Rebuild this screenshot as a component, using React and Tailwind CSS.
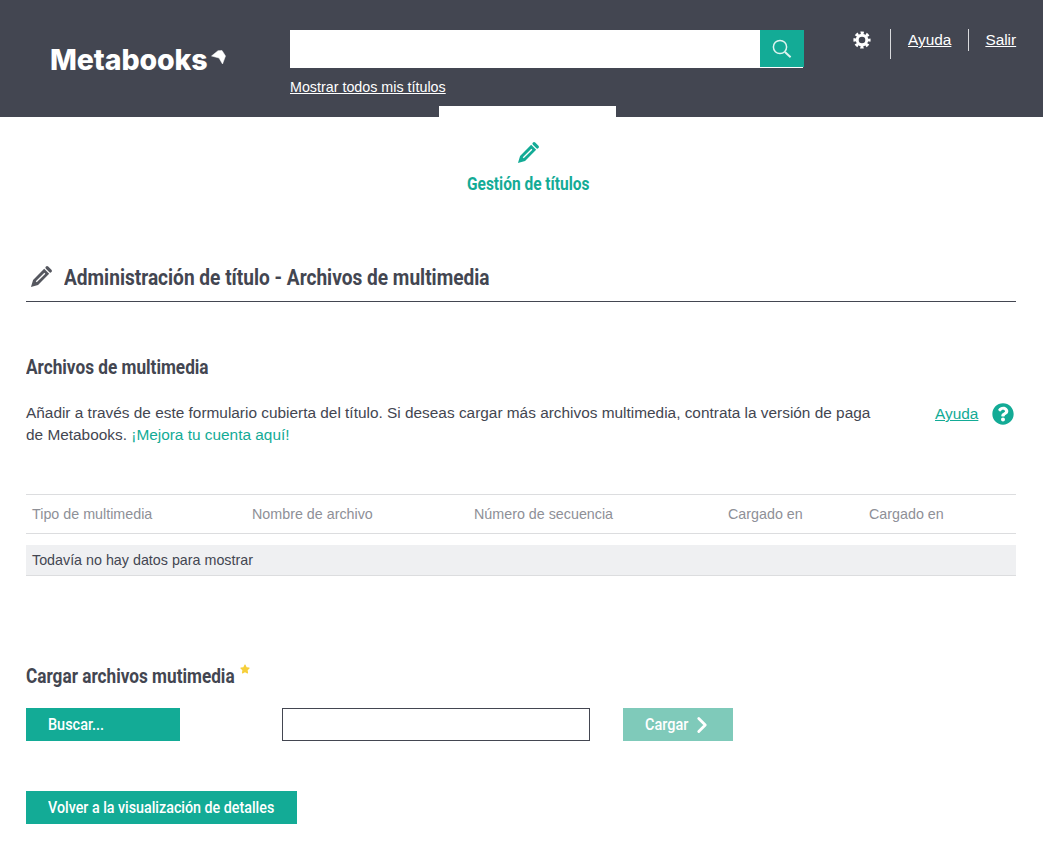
import React from "react";
import { FaQuestionCircle, FaStar } from "react-icons/fa";
import { ChevronRight } from "lucide-react";

const condensed = "inline-block whitespace-nowrap font-['Roboto',sans-serif]";

function PencilIcon({ className }) {
  return (
    <svg className={className} viewBox="0 0 24 24" fill="currentColor">
      <path
        fillRule="evenodd"
        d="M1 23 L3.2 15.6 L14.8 4 L20 9.2 L8.4 20.8 Z M6 17 L7 18 L16 9 L15 8 Z"
      />
      <line x1="17.8" y1="2.8" x2="21.2" y2="6.2" stroke="currentColor" strokeWidth="3.4" strokeLinecap="round" />
    </svg>
  );
}

function GearIcon() {
  return (
    <svg className="ml-[49px] mt-[2px]" width="18" height="18" viewBox="0 0 18 18" fill="none" stroke="#fff">
      <circle cx="9" cy="9" r="4.8" strokeWidth="3" />
      <circle cx="9" cy="9" r="7.2" strokeWidth="2.8" strokeDasharray="3.2 2.45" strokeDashoffset="1.6" />
    </svg>
  );
}

function Header() {
  return (
    <header className="relative flex h-[117px] bg-[#434651] text-white">
      <div className="flex w-[290px] shrink-0 items-start pl-[50px] pt-[42px]">
        <span className="font-['Inter',sans-serif] text-[28.5px] font-extrabold leading-[36px] tracking-[-0.1px]">
          Metabooks
        </span>
        <svg className="ml-[3px] mt-[8px]" width="15" height="15" viewBox="0 0 15 15">
          <path d="M0.5 6 L7 0.7 L11 0.5 L14.5 6 L11.5 14 L8 8 Z" fill="#fff" stroke="#fff" strokeWidth="0.5" strokeLinejoin="round" />
        </svg>
      </div>
      <div className="w-[514px] shrink-0 pt-[30px]">
        <div className="flex h-[38px] w-[513px] items-start bg-white">
          <div className="flex-1" />
          <button className="-mr-px flex h-[37px] w-[44px] items-center justify-center bg-[#13ab96]">
            <svg width="20" height="20" viewBox="0 0 20 20" fill="none" stroke="#dff4f0">
              <circle cx="8" cy="8" r="6.6" strokeWidth="1.5" />
              <line x1="13" y1="13" x2="18.6" y2="18.2" strokeWidth="2" />
            </svg>
          </button>
        </div>
        <a className="mt-[10px] block text-[14.3px] leading-[18px] underline">Mostrar todos mis títulos</a>
      </div>
      <div className="flex flex-1 items-start pt-[29px] text-[15.4px]">
        <GearIcon />
        <div className="ml-[19px] h-[30px] w-px bg-[#d9dadd]" />
        <a className="ml-[17px] leading-[21px] underline">Ayuda</a>
        <div className="ml-[17px] h-[22px] w-px bg-[#d9dadd]" />
        <a className="ml-[16px] leading-[21px] underline">Salir</a>
      </div>
      <div className="absolute bottom-0 left-[439px] h-[11px] w-[177px] bg-white" />
    </header>
  );
}

function Nav() {
  return (
    <nav className="flex flex-col items-center pl-[13px] pt-[24px] text-[#13ab96]">
      <PencilIcon className="h-[23px] w-[23px]" />
      <span className={`${condensed} mt-[9px] origin-center scale-x-[0.86] text-[18px] font-bold leading-[22px]`}>
        Gestión de títulos
      </span>
    </nav>
  );
}

function MediaTable() {
  const columns = ["Tipo de multimedia", "Nombre de archivo", "Número de secuencia", "Cargado en", "Cargado en"];
  return (
    <div className="mt-[48px] text-[14.3px]">
      <div className="grid h-[40px] grid-cols-[220px_222px_254px_141px_1fr] items-center border-y border-[#dcdddf] pl-[6px] pt-[2px] text-[#8e9097]">
        {columns.map((name, i) => (
          <span key={i}>{name}</span>
        ))}
      </div>
      <div className="mt-[11px] flex h-[31px] items-center border-b border-[#dcdddf] bg-[#eff0f2] pl-[6px] pt-[2px] text-[#434651]">
        Todavía no hay datos para mostrar
      </div>
    </div>
  );
}

function App() {
  return (
    <div className="h-[848px] overflow-hidden bg-white font-['Liberation_Sans',sans-serif] text-[#434651]">
      <Header />
      <Nav />
      <main className="pl-[26px] pr-[27px]">
        <div className="mt-[67px] flex h-[40px] items-start border-b border-[#434651]">
          <PencilIcon className="ml-[4px] mt-[3px] h-[23px] w-[23px] text-[#55575f]" />
          <h1 className={`${condensed} ml-[11px] origin-left scale-x-[0.868] text-[22px] font-bold leading-[32px]`}>
            Administración de título - Archivos de multimedia
          </h1>
        </div>
        <h2 className={`${condensed} mt-[52px] block origin-left scale-x-[0.86] text-[20px] font-bold leading-[26px]`}>
          Archivos de multimedia
        </h2>
        <div className="mt-[21px] flex items-start">
          <p className="w-[850px] text-[15.4px] leading-[22px]">
            Añadir a través de este formulario cubierta del título. Si deseas cargar más archivos multimedia, contrata la versión de paga de Metabooks.{" "}
            <a className="text-[#13ab96]">¡Mejora tu cuenta aquí!</a>
          </p>
          <a className="ml-[59px] mt-[1px] text-[15.4px] leading-[22px] text-[#13ab96] underline">Ayuda</a>
          <FaQuestionCircle size={22} className="ml-[14px] mt-[1px] text-[#13ab96]" />
        </div>
        <MediaTable />
        <div className="mt-[87px] flex items-start">
          <h2 className={`${condensed} w-[209px] origin-left scale-x-[0.86] text-[20px] font-bold leading-[26px]`}>
            Cargar archivos mutimedia
          </h2>
          <FaStar size={10} className="ml-[5px] mt-[1px] text-[#f6cf3a]" />
        </div>
        <div className="mt-[19px] flex">
          <button className="h-[33px] w-[154px] bg-[#13ab96] pl-[22px] text-left text-white">
            <span className={`${condensed} origin-left scale-x-[0.85] text-[17px] font-medium`}>Buscar...</span>
          </button>
          <input className="ml-[102px] h-[33px] w-[308px] border border-[#434651]" />
          <button className="ml-[33px] flex h-[33px] w-[110px] items-center bg-[#7fcaba] pl-[22px] text-white">
            <span className={`${condensed} w-[45px] origin-left scale-x-[0.85] text-[17px] font-medium`}>Cargar</span>
            <ChevronRight size={26} strokeWidth={2.6} className="-ml-[1px]" />
          </button>
        </div>
        <button className="mt-[50px] h-[33px] w-[271px] bg-[#13ab96] pl-[22px] text-left text-white">
          <span className={`${condensed} origin-left scale-x-[0.84] text-[17px] font-medium`}>Volver a la visualización de detalles</span>
        </button>
      </main>
    </div>
  );
}

export default App;
